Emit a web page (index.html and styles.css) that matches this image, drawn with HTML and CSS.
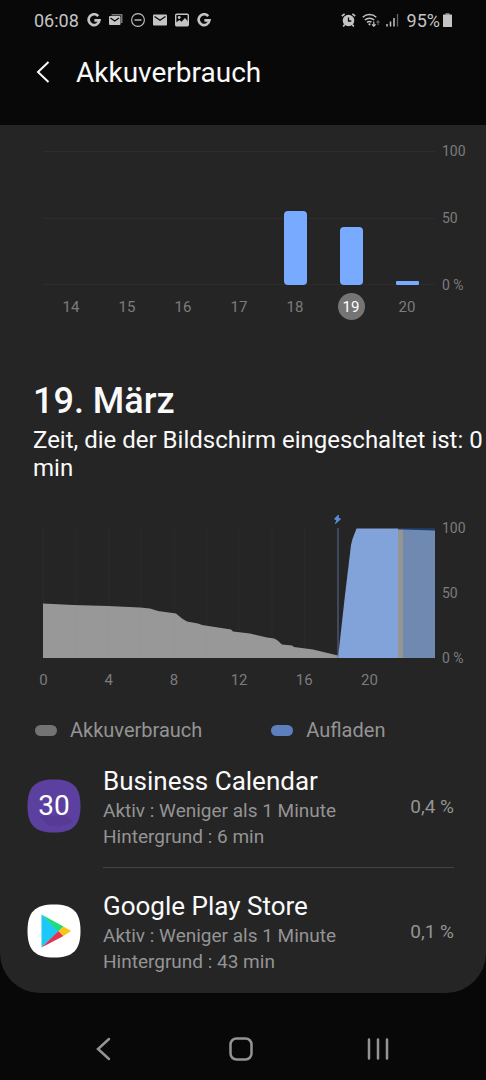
FILE: index.html
```html
<!DOCTYPE html>
<html lang="de">
<head>
    <meta charset="UTF-8">
    <meta name="viewport" content="width=device-width, initial-scale=1.0">
    <title>Akkuverbrauch</title>
    <link rel="stylesheet" href="styles.css">
</head>
<body>
    <div class="status-bar">
        <div class="status-left">
            <span>06:08</span>
            <svg width="14" height="14" viewBox="0 0 14 14"><path d="M11.2 3.2A5.4 5.4 0 1 0 12.4 7.4H7.4" fill="none" stroke="currentColor" stroke-width="2.7"/></svg>
            <svg width="14" height="14" viewBox="0 0 14 14"><path d="M2.500 1H13.500V10H12V2.500H2.500z" fill="#777"/><rect x="0" y="3" width="11.500" height="9" rx="1" fill="currentColor"/><path d="M1.500 5L5.700 8L10 5" fill="none" stroke="#080808" stroke-width="1.200"/></svg>
            <svg width="14" height="14" viewBox="0 0 14 14"><circle cx="7" cy="7" r="6.400" fill="none" stroke="currentColor" stroke-width="1.100"/><path d="M3.500 7H10.500" stroke="currentColor" stroke-width="1.400"/></svg>
            <svg width="14" height="14" viewBox="0 0 14 14"><rect y="1.500" width="14" height="11" rx="1" fill="currentColor"/><path d="M1.500 3.500L7 7.200L12.500 3.500" fill="none" stroke="#080808" stroke-width="1.300"/></svg>
            <svg width="14" height="14" viewBox="0 0 14 14"><rect x="0.700" y="1.200" width="12.600" height="11.600" rx="1" fill="none" stroke="currentColor" stroke-width="1.400"/><circle cx="4.200" cy="4.500" r="1.400" fill="currentColor"/><path d="M1 9.500L4.500 7L6.500 8.800L10 5L13 8.500V13H1z" fill="currentColor"/></svg>
            <svg width="14" height="14" viewBox="0 0 14 14"><path d="M11.2 3.2A5.4 5.4 0 1 0 12.4 7.4H7.4" fill="none" stroke="currentColor" stroke-width="2.7"/></svg>
        </div>
        <div class="status-right">
            <svg width="15" height="14" viewBox="0 0 15 14"><circle cx="7.500" cy="7.500" r="5.800" fill="currentColor"/><path d="M7.500 4.500V8H10.300" fill="none" stroke="#080808" stroke-width="1.300"/><path d="M0.800 3.200L3.600 0.800M14.200 3.200L11.400 0.800M3.800 11.500L2.200 13.500M11.200 11.500L12.800 13.500" stroke="currentColor" stroke-width="1.700"/></svg>
            <svg width="18" height="14" viewBox="0 0 18 14"><path d="M0.700 4.200A10 10 0 0 1 14.300 4.200M2.800 7A7 7 0 0 1 12.200 7M5 9.400A4 4 0 0 1 9.500 9.200" fill="none" stroke="currentColor" stroke-width="1.400"/><circle cx="7.500" cy="11.300" r="1.100" fill="currentColor"/><path d="M11.800 8.500V13M10 11.300L11.800 13.200L13.600 11.300" fill="none" stroke="currentColor" stroke-width="1.200"/><path d="M16 12V8M14.500 9.500L16 7.800L17.500 9.500" fill="none" stroke="#666" stroke-width="1.100"/></svg>
            <svg width="13" height="14" viewBox="0 0 13 14"><path d="M1 11V13.500M4.500 8.500V13.500M8 5V13.500" stroke="currentColor" stroke-width="1.500"/><path d="M11.500 1V13.500" stroke="#666" stroke-width="1.300"/></svg>
            <span class="battery">95%<svg width="9" height="14" viewBox="0 0 9 14"><rect x="2.500" width="4" height="2" fill="#777"/><rect y="1.500" width="9" height="12.500" rx="0.500" fill="currentColor"/></svg></span>
        </div>
    </div>

    <header class="app-bar">
        <button class="back" aria-label="Zurück"><svg width="14" height="22" viewBox="0 0 14 22"><path d="M12.500 1L2 11L12.500 21" fill="none" stroke="currentColor" stroke-width="2"/></svg></button>
        <h1>Akkuverbrauch</h1>
    </header>

    <main class="card">
        <!-- Wochenverlauf -->
        <section class="week">
            <div class="plot">
                <div class="column"></div>
                <div class="column"></div>
                <div class="column"></div>
                <div class="column"></div>
                <div class="column"><div class="bar" style="height: 55%"></div></div>
                <div class="column"><div class="bar" style="height: 43%"></div></div>
                <div class="column"><div class="bar small" style="height: 3%"></div></div>
            </div>
            <div class="scale">
                <span>100</span>
                <span>50</span>
                <span>0 %</span>
            </div>
            <div class="days">
                <button>14</button>
                <button>15</button>
                <button>16</button>
                <button>17</button>
                <button>18</button>
                <button class="selected" aria-pressed="true">19</button>
                <button>20</button>
            </div>
        </section>

        <section class="summary">
            <h2>19. März</h2>
            <p>Zeit, die der Bildschirm eingeschaltet ist: 0 min</p>
        </section>

        <!-- Tagesverlauf -->
        <section class="day">
            <svg class="day-plot" viewBox="0 0 392 144">
                <path d="M0.500 14V144M33 14V144M65.500 14V144M98 14V144M131 14V144M163.500 14V144M196 14V144M229 14V144M261.500 14V144" stroke="#2a2a2a"/>
                <path d="M0 89.500L30 91L65 92L97 93.500L107 94.500L115 97L133 99.500L139 104.500L144 107.500L155 109.500L159 111L188 115.500L190 117.500L207 119.500L224 123.500L231 124.500L234 126L239 130.500L249 131.500L251 133L270 135.500L295 141.500V144H0z" fill="#989898"/>
                <path d="M33 92V144M65.500 93V144M98 94V144M131 100V144M163.500 112V144" stroke="#959595"/>
                <path d="M295 14V144" stroke="#5a6c96"/>
                <path d="M295 144L302 81L308 31L309.500 25L313.500 14.500H355V144z" fill="#82a2da"/>
                <path d="M355 14H392V18H355z" fill="#1d3a63"/>
                <path d="M355 15.500H360V144H355z" fill="#959691"/>
                <path d="M360 15.500L392 16.500V144H360z" fill="#7089b0"/>
                <path d="M295.500 1L291.500 5L294 6L292.500 9.500L297.500 5L295 4z" fill="#5b8fdc" stroke="#5b8fdc" stroke-linejoin="round"/>
            </svg>
            <div class="scale">
                <span>100</span>
                <span>50</span>
                <span>0 %</span>
            </div>
        </section>
        <div class="hours">
            <span>0</span>
            <span>4</span>
            <span>8</span>
            <span>12</span>
            <span>16</span>
            <span>20</span>
        </div>
        <div class="legend">
            <span class="usage">Akkuverbrauch</span>
            <span class="charging">Aufladen</span>
        </div>

        <ul class="apps">
            <li>
                <svg class="app-icon" viewBox="0 0 54 54">
                    <path d="M27 0.500C46 0.500 53.500 8 53.500 27S46 53.500 27 53.500S0.500 46 0.500 27S8 0.500 27 0.500z" fill="#5c40a0"/>
                    <path d="M12 37H40L46 43Q38 48 22 47z" fill="#563a96"/>
                    <text x="27" y="36" text-anchor="middle" class="icon-text">30</text>
                </svg>
                <div class="app-body">
                    <div class="app-info">
                        <h3>Business Calendar</h3>
                        <p>Aktiv : Weniger als 1 Minute</p>
                        <p>Hintergrund : 6 min</p>
                    </div>
                    <span class="percent">0,4 %</span>
                </div>
            </li>
            <li>
                <svg class="app-icon" viewBox="0 0 54 54">
                    <path d="M27 0.500C46 0.500 53.500 8 53.500 27S46 53.500 27 53.500S0.500 46 0.500 27S8 0.500 27 0.500z" fill="#fff"/>
                    <path d="M14.500 10.500L32 27L14.500 43.500z" fill="#1cc8f5"/>
                    <path d="M14.500 10.500L36.500 22.500L31.500 27.500z" fill="#1edb7b"/>
                    <path d="M14.500 43.500L36.500 32L31.500 27z" fill="#e1354f"/>
                    <path d="M36.500 22.500L44 27L36.500 32L31.500 27.200z" fill="#fbc314"/>
                </svg>
                <div class="app-body">
                    <div class="app-info">
                        <h3>Google Play Store</h3>
                        <p>Aktiv : Weniger als 1 Minute</p>
                        <p>Hintergrund : 43 min</p>
                    </div>
                    <span class="percent">0,1 %</span>
                </div>
            </li>
        </ul>
    </main>

    <nav class="nav-bar">
        <button aria-label="Zurück"><svg width="24" height="24" viewBox="0 0 24 24"><path d="M17 2L6 12L17 22" fill="none" stroke="currentColor" stroke-width="2.500" stroke-linecap="round"/></svg></button>
        <button aria-label="Startseite"><svg width="24" height="24" viewBox="0 0 24 24"><rect x="1.500" y="1.500" width="21" height="21" rx="6" fill="none" stroke="currentColor" stroke-width="2.500"/></svg></button>
        <button aria-label="Letzte Apps"><svg width="24" height="24" viewBox="0 0 24 24"><path d="M3 2.500V21.500M12 2.500V21.500M21 2.500V21.500" stroke="currentColor" stroke-width="2.500" stroke-linecap="round"/></svg></button>
    </nav>
</body>
</html>
```
FILE: styles.css
```css
body {
    font-family: Roboto, "Liberation Sans", sans-serif;
    background-color: #080808;
    color: #fafafa;
    margin: 0;
}

h1, h2, h3, p, ul {
    margin: 0;
    padding: 0;
    font-weight: 400;
}

button {
    background: none;
    border: none;
    padding: 0;
    color: inherit;
    font: inherit;
    cursor: pointer;
}

svg {
    display: block;
    flex-shrink: 0;
}

/* Statusleiste */
.status-bar {
    display: flex;
    justify-content: space-between;
    height: 40px;
    padding: 0 34px;
    color: #c4c4c4;
    font-size: 18px;
}

.status-left, .status-right {
    display: flex;
    align-items: center;
    gap: 8px;
}

.status-right {
    gap: 6px;
}

.battery {
    display: flex;
    align-items: center;
    gap: 3px;
    margin-left: 2px;
}

.app-bar {
    display: flex;
    align-items: center;
    gap: 26px;
    height: 64px;
    padding: 0 36px 21px;
}

.app-bar h1 {
    font-size: 28px;
}

.card {
    background-color: #252525;
    border-radius: 0 0 40px 40px;
}

/* Diagramme */
.week, .day {
    display: grid;
    grid-template-columns: 1fr 51px;
    padding-left: 43px;
}

.week {
    padding-top: 26px;
}

.plot {
    display: grid;
    grid-template-columns: repeat(7, 1fr);
    height: 134px;
    background:
        linear-gradient(#2c2c2c, #2c2c2c) 0 0 / 100% 1px no-repeat,
        linear-gradient(#2c2c2c, #2c2c2c) 0 50% / 100% 1px no-repeat,
        linear-gradient(#2c2c2c, #2c2c2c) 0 100% / 100% 1px no-repeat;
}

.column {
    display: flex;
    justify-content: center;
    align-items: flex-end;
}

.bar {
    width: 23px;
    background-color: #78aaff;
    border-radius: 4px;
}

.bar.small {
    border-radius: 1px;
}

.scale {
    display: flex;
    flex-direction: column;
    justify-content: space-between;
    margin: -8px 0;
    padding-left: 7px;
    color: #7c7c7c;
    font-size: 14px;
    line-height: 16px;
}

.day .scale {
    margin-top: 6px;
}

.days {
    display: grid;
    grid-template-columns: repeat(7, 1fr);
    justify-items: center;
    margin-top: 8px;
    color: #7c7c7c;
    font-size: 15px;
}

.days button {
    width: 27px;
    height: 27px;
    border-radius: 50%;
}

.days .selected {
    background-color: #757575;
    color: #fff;
}

.summary {
    padding: 60px 0 32px 33px;
}

.summary h2 {
    font-size: 36px;
    font-weight: 500;
    line-height: 42px;
    margin-bottom: 4px;
}

.summary p {
    font-size: 24px;
    line-height: 28px;
}

.day-plot {
    width: 100%;
}

.hours {
    display: grid;
    grid-template-columns: repeat(6, 1fr);
    margin: 13px 84px 0 11px;
    color: #7c7c7c;
    font-size: 15px;
    line-height: 18px;
    text-align: center;
}

.legend {
    display: flex;
    gap: 69px;
    margin-top: 29px;
    margin-bottom: 1px;
    padding-left: 35px;
    color: #949494;
    font-size: 20px;
    line-height: 24px;
}

.legend span {
    display: flex;
    align-items: center;
    gap: 13px;
}

.legend span::before {
    content: "";
    width: 22px;
    height: 11px;
    border-radius: 6px;
    background-color: #737373;
}

.legend .charging::before {
    background-color: #5c80bd;
}

/* Liste der Apps */
.apps {
    list-style: none;
}

.apps li {
    display: flex;
    align-items: center;
    gap: 22px;
    padding: 0 32px 0 27px;
}

.app-icon {
    width: 54px;
    height: 54px;
}

.icon-text {
    fill: #fff;
    font-size: 28px;
}

.app-body {
    display: flex;
    flex: 1;
    justify-content: space-between;
    align-items: center;
    padding: 21px 0 17px;
    border-bottom: 1px solid #444;
}

.apps li:last-child .app-body {
    border-color: transparent;
}

.app-info h3 {
    font-size: 26px;
    line-height: 34px;
}

.app-info p, .percent {
    color: #949494;
    font-size: 19px;
    line-height: 26px;
}

.nav-bar {
    display: grid;
    grid-template-columns: repeat(3, 1fr);
    justify-items: center;
    padding: 44px 40px 19px 36px;
    color: #949494;
}
```
